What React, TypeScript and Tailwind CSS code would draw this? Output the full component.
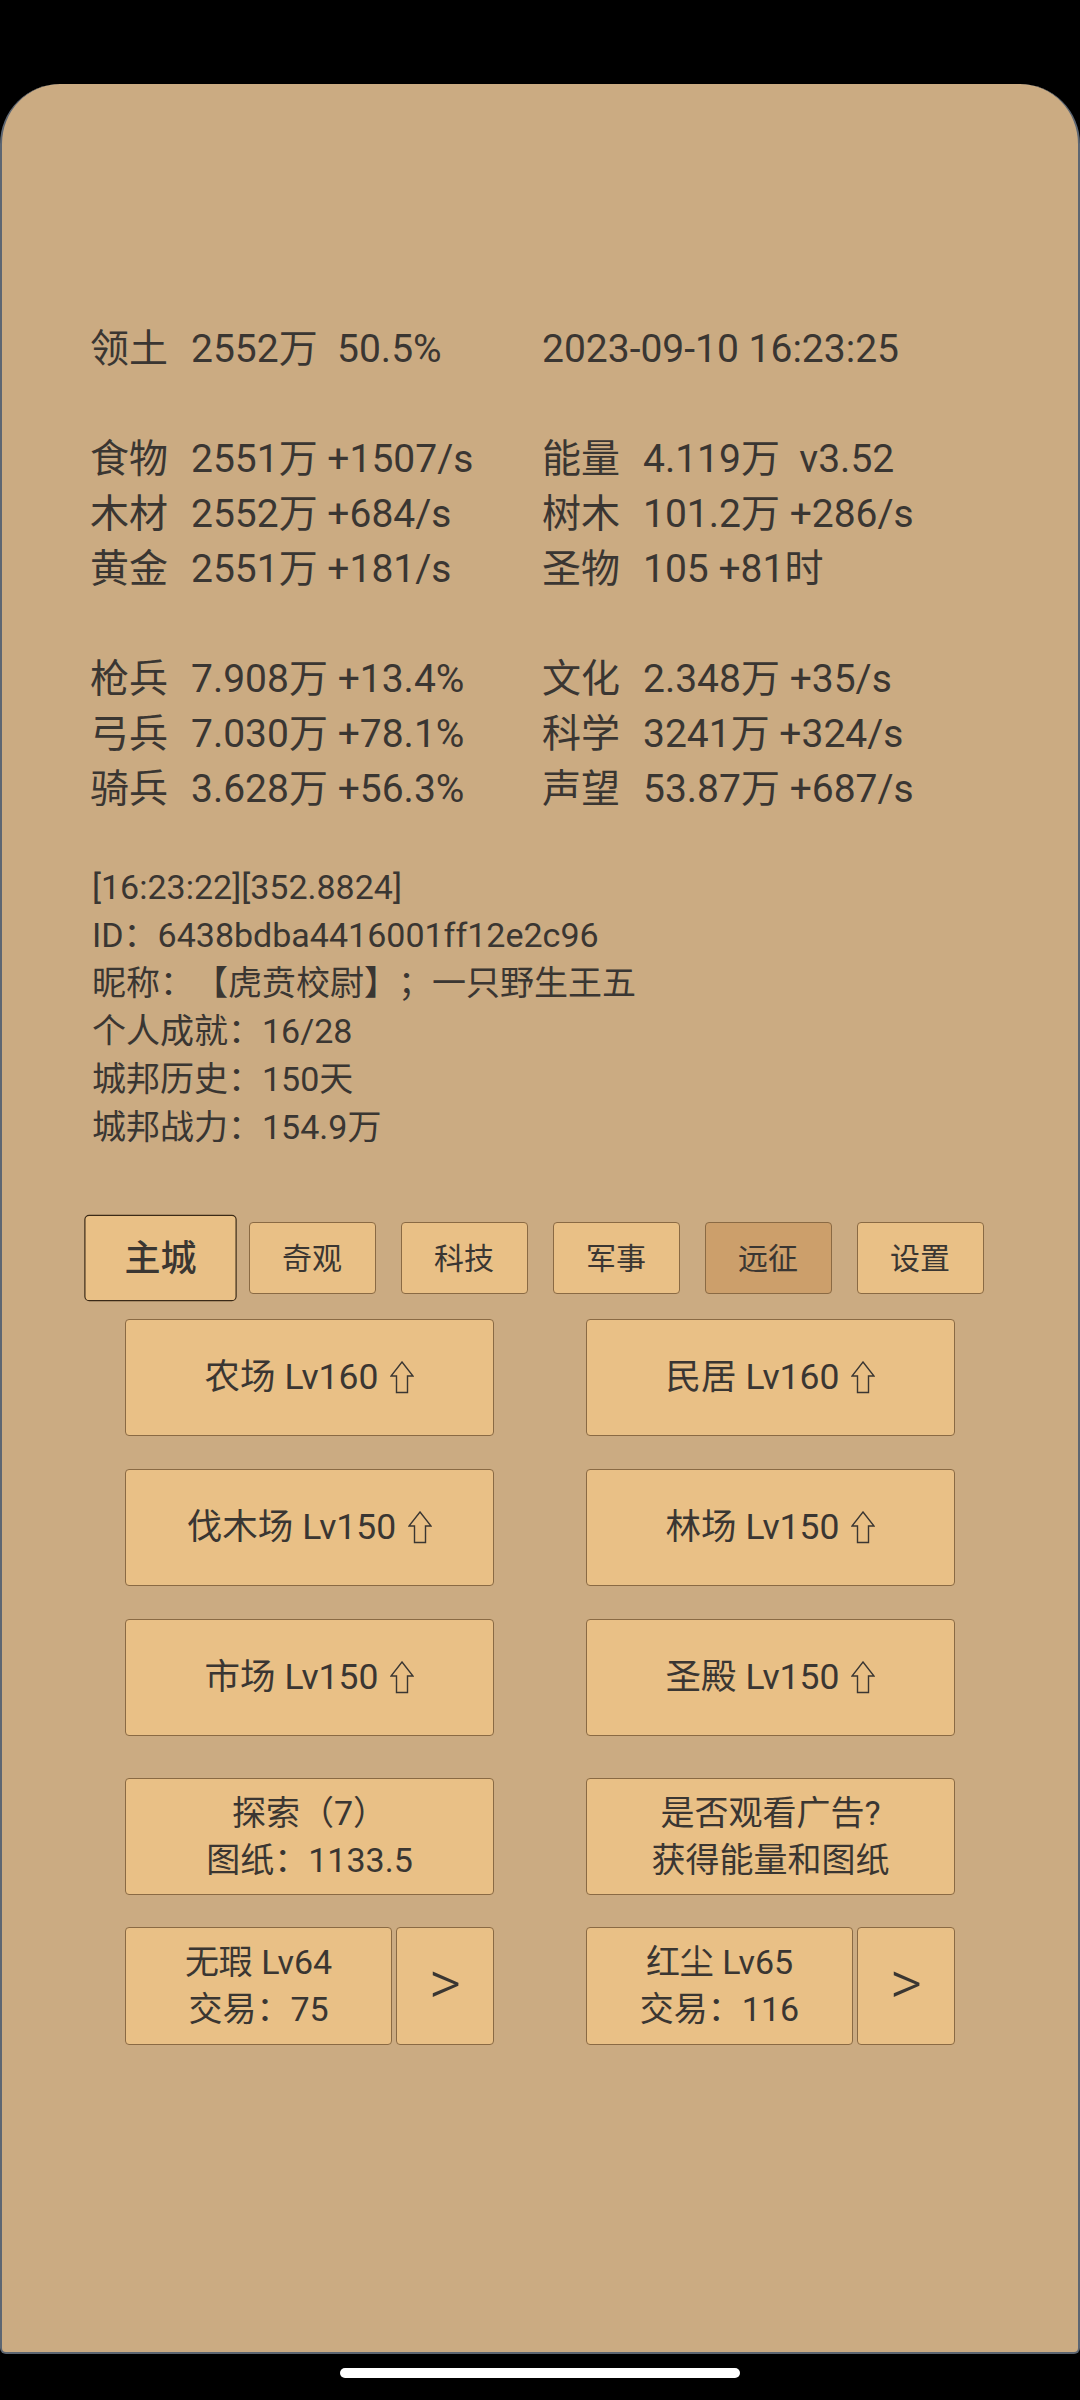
const stats = [
  [['领土', '2552万  50.5%'], ['', '2023-09-10 16:23:25']],
  null,
  [['食物', '2551万 +1507/s'], ['能量', '4.119万  v3.52']],
  [['木材', '2552万 +684/s'], ['树木', '101.2万 +286/s']],
  [['黄金', '2551万 +181/s'], ['圣物', '105 +81时']],
  null,
  [['枪兵', '7.908万 +13.4%'], ['文化', '2.348万 +35/s']],
  [['弓兵', '7.030万 +78.1%'], ['科学', '3241万 +324/s']],
  [['骑兵', '3.628万 +56.3%'], ['声望', '53.87万 +687/s']],
]

const info = [
  '[16:23:22][352.8824]',
  'ID：6438bdba4416001ff12e2c96',
  '昵称：【虎贲校尉】；一只野生王五',
  '个人成就：16/28',
  '城邦历史：150天',
  '城邦战力：154.9万',
]

const tabs = ['主城', '奇观', '科技', '军事', '远征', '设置']

const buildings = [
  ['农场', 'Lv160'],
  ['民居', 'Lv160'],
  ['伐木场', 'Lv150'],
  ['林场', 'Lv150'],
  ['市场', 'Lv150'],
  ['圣殿', 'Lv150'],
]

function UpArrow() {
  return (
    <svg width="24" height="33" viewBox="0 0 24 33" className="ml-[12px] shrink-0">
      <path
        d="M12 1 L23 15 L17.5 15 L17.5 31.5 L6.5 31.5 L6.5 15 L1 15 Z"
        fill="none"
        stroke="#3a3632"
        strokeWidth="1.4"
      />
    </svg>
  )
}

function StatCell({ label, value }: { label: string; value: string }) {
  if (!label) return <div className="whitespace-pre">{value}</div>
  return (
    <div className="flex whitespace-pre">
      <span className="w-[101px] shrink-0">{label}</span>
      <span>{value}</span>
    </div>
  )
}

export default function App() {
  return (
    <div className="w-[1080px] h-[2400px] bg-black flex flex-col font-['Roboto','Noto_Sans_CJK_SC',sans-serif] text-[#3a3632] [text-spacing-trim:space-all]">
      {/* status bar area */}
      <div className="h-[84px] shrink-0" />

      <div className="h-[2270px] shrink-0 bg-[#cbab82] rounded-t-[60px] rounded-b-[6px] border-x-2 border-b-2 border-[#5d6672] pt-[238px]">
        {/* resources */}
        <div className="px-[88px] text-[39px] leading-[55px]">
          {stats.map((row, i) =>
            row ? (
              <div key={i} className="grid grid-cols-[452px_1fr]">
                <StatCell label={row[0][0]} value={row[0][1]} />
                <StatCell label={row[1][0]} value={row[1][1]} />
              </div>
            ) : (
              <div key={i} className="h-[55px]" />
            )
          )}
        </div>

        {/* player info */}
        <div className="mt-[46px] px-[90px] text-[34px] leading-[48px]">
          {info.map((t) => (
            <div key={t}>{t}</div>
          ))}
        </div>

        {/* tabs */}
        <div className="mt-[71px] flex justify-center gap-[25px]">
          {tabs.map((t, i) => (
            <div
              key={t}
              className={
                i === 0
                  ? 'w-[127px] h-[72px] flex items-center justify-center rounded-[4px] border border-[#3b2a17] bg-[#e9c086] text-[30px] font-medium scale-[1.2]'
                  : i === 4
                  ? 'w-[127px] h-[72px] flex items-center justify-center rounded-[4px] border border-[#8a6a44] bg-[#cc9f6b] text-[30px]'
                  : 'w-[127px] h-[72px] flex items-center justify-center rounded-[4px] border border-[#8a6a44] bg-[#e9c086] text-[30px]'
              }
            >
              {t}
            </div>
          ))}
        </div>

        {/* buildings */}
        <div className="mt-[25px] grid grid-cols-[369px_369px] justify-center gap-x-[92px] gap-y-[33px] text-[35.5px]">
          {buildings.map(([name, lv]) => (
            <button
              key={name}
              className="h-[117px] flex items-center justify-center rounded-[4px] border border-[#8a6a44] bg-[#e9c086]"
            >
              <span>{name}</span>
              <span className="ml-[9px]">{lv}</span>
              <UpArrow />
            </button>
          ))}
        </div>

        {/* explore / ads */}
        <div className="mt-[42px] grid grid-cols-[369px_369px] justify-center gap-x-[92px] gap-y-[32px] text-[34px] leading-[47px]">
          <button className="h-[117px] flex flex-col items-center justify-center rounded-[4px] border border-[#8a6a44] bg-[#e9c086]">
            <span>探索（7）</span>
            <span>图纸：1133.5</span>
          </button>
          <button className="h-[117px] flex flex-col items-center justify-center rounded-[4px] border border-[#8a6a44] bg-[#e9c086]">
            <span>是否观看广告?</span>
            <span>获得能量和图纸</span>
          </button>
          {[
            ['无瑕 Lv64', '交易：75'],
            ['红尘 Lv65', '交易：116'],
          ].map(([a, b]) => (
            <div key={a} className="flex gap-[4px]">
              <button className="w-[267px] h-[118px] flex flex-col items-center justify-center rounded-[4px] border border-[#8a6a44] bg-[#e9c086]">
                <span>{a}</span>
                <span>{b}</span>
              </button>
              <button className="flex-1 h-[118px] flex items-center justify-center rounded-[4px] border border-[#8a6a44] bg-[#e9c086] text-[62px] font-light leading-none pb-[6px]">
                &gt;
              </button>
            </div>
          ))}
        </div>
      </div>

      {/* home indicator */}
      <div className="flex-1 flex items-start justify-center pt-[14px]">
        <div className="w-[400px] h-[10px] rounded-full bg-white" />
      </div>
    </div>
  )
}
